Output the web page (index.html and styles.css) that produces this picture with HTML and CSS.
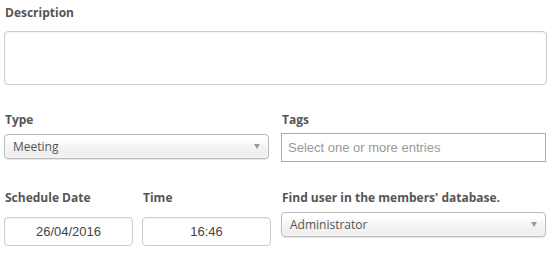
FILE: index.html
```html
<!DOCTYPE html>
<html lang="en">
<head>
    <meta charset="UTF-8">
    <title>Schedule</title>
    <link rel="stylesheet" href="styles.css">
</head>
<body>
    <form class="event-form">
        <div class="field">
            <label>Description</label>
            <div class="textarea"></div>
        </div>

        <div class="row row-type">
            <div class="col">
                <label>Type</label>
                <div class="select">
                    <span>Meeting</span>
                    <i class="arrow"></i>
                </div>
            </div>
            <div class="col col-right">
                <label>Tags</label>
                <div class="tags">Select one or more entries</div>
            </div>
        </div>

        <div class="row row-schedule">
            <div class="col dates">
                <div class="date-col">
                    <label>Schedule Date</label>
                    <div class="text-input">26/04/2016</div>
                </div>
                <div class="date-col">
                    <label>Time</label>
                    <div class="text-input">16:46</div>
                </div>
            </div>
            <div class="col col-right">
                <label>Find user in the members' database.</label>
                <div class="select">
                    <span>Administrator</span>
                    <i class="arrow"></i>
                </div>
            </div>
        </div>
    </form>
</body>
</html>
```

FILE: styles.css
```css
* {
    box-sizing: border-box;
}

body {
    margin: 0;
    background: #fff;
    font-family: 'Open Sans', sans-serif;
    color: #444;
}

.event-form {
    padding: 5px 9px 0 4px;
    width: 556px;
}

label {
    display: block;
    font-size: 12px;
    font-weight: 700;
    color: #555;
    line-height: 16px;
    padding-left: 1px;
}

.field label {
    margin-bottom: 10px;
}

.textarea {
    height: 54px;
    border: 1px solid #ccc;
    border-radius: 4px;
    box-shadow: inset 0 1px 2px rgba(0,0,0,0.06);
}

.row {
    display: flex;
    gap: 10px;
}

.row-type {
    margin-top: 27px;
}

.row-schedule {
    margin-top: 28px;
}

.col {
    width: 265px;
}

.col-right {
    margin-left: 2px;
    width: 265px;
}

.row-schedule .col-right {
    margin-left: 0;
}

.row label {
    margin-bottom: 6px;
}

.select {
    height: 25px;
    border: 1px solid #bbb;
    border-radius: 4px;
    background: linear-gradient(#fff 20%, #f4f4f4 50%, #eee 100%);
    box-shadow: 0 0 3px #fff inset, 0 1px 1px rgba(0,0,0,0.1);
    display: flex;
    align-items: center;
    justify-content: space-between;
    padding: 0 8px 0 8px;
    font-size: 12px;
    color: #555;
}

.arrow {
    width: 0;
    height: 0;
    border-left: 3px solid transparent;
    border-right: 3px solid transparent;
    border-top: 5px solid #999;
}

.tags {
    height: 29px;
    border: 1px solid #aaa;
    padding: 0 6px;
    font-family: 'Liberation Sans', Arial, sans-serif;
    font-size: 13px;
    color: #999;
    display: flex;
    align-items: center;
    margin-top: -1px;
}

.dates {
    display: flex;
    gap: 9px;
    width: 267px;
}

.date-col {
    width: 129px;
}

.date-col label {
    margin-bottom: 11px;
}

.text-input {
    height: 29px;
    border: 1px solid #ccc;
    border-radius: 4px;
    box-shadow: inset 0 1px 2px rgba(0,0,0,0.06);
    font-family: 'Liberation Sans', Arial, sans-serif;
    font-size: 13px;
    color: #444;
    display: flex;
    align-items: center;
    justify-content: center;
}
```
